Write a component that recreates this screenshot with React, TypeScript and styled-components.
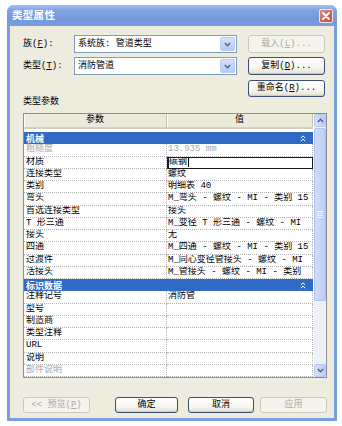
import React from 'react';
import styled, { createGlobalStyle } from 'styled-components';

const Global = createGlobalStyle`
  html, body { margin: 0; padding: 0; background: #ffffff; }
  body {
    font-family: "Liberation Mono", "Noto Sans CJK SC", monospace;
    font-size: 9px;
    color: #000;
  }
  * { box-sizing: border-box; }
`;

const Page = styled.div`
  padding: 5px 5px 5px 7px;
`;

const Window = styled.div`
  width: 330px;
  height: 416px;
  display: flex;
  flex-direction: column;
  background: #7c9de0;
  border-radius: 7px 7px 0 0;
`;

const TitleBar = styled.div`
  height: 21px;
  flex: none;
  display: flex;
  align-items: center;
  justify-content: space-between;
  padding: 0 4px 0 5px;
  border-radius: 7px 7px 0 0;
  background: linear-gradient(#a4c0f0 0%, #7fa3e3 25%, #7398dc 70%, #7b9ee0 100%);
`;

const Title = styled.span`
  font-family: "Noto Sans CJK SC", sans-serif;
  font-weight: bold;
  font-size: 10.5px;
  line-height: 1;
  color: #ffffff;
  letter-spacing: 0.3px;
`;

const CloseButton = styled.div`
  width: 14px;
  height: 14px;
  margin-top: 1px;
  border: 1px solid #f4e4e2;
  border-radius: 2px;
  background: linear-gradient(135deg, #dc8e85, #c6635a 60%, #b9544c);
  display: flex;
  align-items: center;
  justify-content: center;
`;

const Body = styled.div`
  flex: 1;
  margin: 0 3px 3px 3px;
  background: #eeecdf;
  display: flex;
  flex-direction: column;
  padding: 9px 7px 0 13px;
`;

const TopGrid = styled.div`
  display: grid;
  grid-template-columns: 51px 163px 1fr 77px;
  grid-auto-rows: 18px;
  row-gap: 4px;
  align-items: center;
  padding-right: 2px;
`;

const FieldLabel = styled.div`
  grid-column: 1;
  line-height: 11px;
  white-space: nowrap;
`;

const Select = styled.div`
  grid-column: 2;
  height: 18px;
  border: 1px solid #7f9db9;
  background: #ffffff;
  display: flex;
  align-items: center;
  padding-left: 3px;
  line-height: 11px;
`;

const DropButton = styled.div`
  width: 15px;
  height: 14px;
  margin-left: auto;
  margin-right: 1px;
  border: 1px solid #b9cbf5;
  border-radius: 2px;
  background: linear-gradient(#d5e0fa, #b8caf4);
  display: flex;
  align-items: center;
  justify-content: center;
`;

const Button = styled.button<{ $w?: number; $h?: number; $col?: number }>`
  grid-column: ${p => p.$col ?? 'auto'};
  width: ${p => (p.$w ? `${p.$w}px` : 'auto')};
  height: ${p => p.$h ?? 18}px;
  padding: 0;
  border: 1px solid #3b4f73;
  border-radius: 3px;
  background: linear-gradient(#ffffff 0%, #f6f5ef 60%, #e3e0d4 100%);
  box-shadow: inset 0 -1px 0 #d0ccbd;
  font: inherit;
  line-height: 11px;
  color: #000;
  display: flex;
  align-items: center;
  justify-content: center;
  white-space: nowrap;
  &:disabled {
    border-color: #cbc8bb;
    background: #f4f3ec;
    box-shadow: none;
    color: #aeab9c;
  }
`;

const SectionLabel = styled.div`
  margin-top: 0;
  line-height: 10px;
  height: 10px;
`;

const PropGrid = styled.div`
  margin-top: 6px;
  height: 265px;
  border: 1px solid #8e8e8e;
  background: #ffffff;
  display: flex;
`;

const Table = styled.div`
  flex: 1;
  min-width: 0;
  display: flex;
  flex-direction: column;
`;

const Header = styled.div`
  display: grid;
  grid-template-columns: 143px 1fr;
  height: 15px;
  flex: none;
  background: #ebeadb;
  border-bottom: 2px solid #d4d0c3;
`;

const HeadCell = styled.div`
  display: flex;
  align-items: center;
  justify-content: center;
  border-right: 1px solid #c5c1ad;
  box-shadow: inset 1px 0 #ffffff;
  line-height: 11px;
`;

const Rows = styled.div`
  margin-top: 3px;
  display: flex;
  flex-direction: column;
`;

const GroupRow = styled.div`
  height: 12.25px;
  background: #316ac5;
  color: #ffffff;
  font-family: "Noto Sans CJK SC", sans-serif;
  font-weight: bold;
  display: flex;
  align-items: center;
  justify-content: space-between;
  padding: 0 7px 0 2px;
  line-height: 11px;
`;

const ItemRow = styled.div`
  height: 12.25px;
  display: grid;
  grid-template-columns: 143px 1fr;
`;

const Cell = styled.div<{ $dim?: boolean; $edit?: boolean; $name?: boolean }>`
  min-width: 0;
  display: flex;
  align-items: center;
  overflow: hidden;
  white-space: nowrap;
  line-height: 11px;
  padding-left: ${p => (p.$name ? 2 : 1)}px;
  color: ${p => (p.$dim ? '#a8a8a8' : '#000')};
  border-bottom: 1px dotted #b4b4b4;
  border-right: 1px dotted #b4b4b4;
  ${p =>
    p.$edit &&
    `
    border: 1px solid #1a1a1a;
    border-left-width: 2px;
    padding-left: 0;
  `}
`;

const Caret = styled.span`
  display: inline-block;
  width: 1px;
  height: 9px;
  margin-left: 1px;
  background: #000;
`;

const ScrollBar = styled.div`
  width: 12px;
  margin-left: 1px;
  display: flex;
  flex-direction: column;
  background: #eef0f8;
`;

const ScrollArrow = styled.div`
  height: 13px;
  flex: none;
  border: 1px solid #b5c8f4;
  border-radius: 2px;
  background: linear-gradient(90deg, #d3def9, #bccdf5);
  display: flex;
  align-items: center;
  justify-content: center;
`;

const Track = styled.div`
  flex: 1;
  padding: 1px 0;
  display: flex;
  flex-direction: column;
`;

const Thumb = styled.div<{ $h: number }>`
  height: ${p => p.$h}px;
  border: 1px solid #aec3f2;
  border-radius: 2px;
  background: linear-gradient(90deg, #cfdcfa, #bccdf6);
  display: flex;
  align-items: center;
  justify-content: center;
`;

const Footer = styled.div`
  margin-top: 19px;
  display: flex;
  align-items: center;
`;

const Spacer = styled.div`
  flex: 1;
`;

const Gap = styled.div<{ $w: number }>`
  width: ${p => p.$w}px;
`;

const ChevronDown = () => (
  <svg width="7" height="5" viewBox="0 0 7 5">
    <polyline points="0.8,1 3.5,3.7 6.2,1" fill="none" stroke="#4d6185" strokeWidth="1.4" />
  </svg>
);

const ChevronUp = () => (
  <svg width="7" height="5" viewBox="0 0 7 5">
    <polyline points="0.8,4 3.5,1.3 6.2,4" fill="none" stroke="#4d6185" strokeWidth="1.4" />
  </svg>
);

const Collapse = () => (
  <svg width="6" height="7" viewBox="0 0 6 7">
    <polyline points="0.8,3 3,0.9 5.2,3" fill="none" stroke="#ffffff" strokeWidth="1" />
    <polyline points="0.8,6.2 3,4.1 5.2,6.2" fill="none" stroke="#ffffff" strokeWidth="1" />
  </svg>
);

const Grip = () => (
  <svg width="6" height="7" viewBox="0 0 6 7">
    {[0.5, 2.5, 4.5, 6.5].map(y => (
      <line key={y} x1="0" y1={y} x2="6" y2={y} stroke="#eef3fd" strokeWidth="1" />
    ))}
  </svg>
);

const CloseX = () => (
  <svg width="8" height="8" viewBox="0 0 8 8">
    <path d="M1 1 L7 7 M7 1 L1 7" stroke="#ffffff" strokeWidth="1.8" strokeLinecap="round" />
  </svg>
);

type Row =
  | { kind: 'group'; name: string }
  | { kind: 'item'; name: string; value?: string; dim?: boolean; edit?: boolean };

const rows: Row[] = [
  { kind: 'group', name: '机械' },
  { kind: 'item', name: '粗糙度', value: '13.935 mm', dim: true },
  { kind: 'item', name: '材质', value: '碳钢', edit: true },
  { kind: 'item', name: '连接类型', value: '螺纹' },
  { kind: 'item', name: '类别', value: '明细表 40' },
  { kind: 'item', name: '弯头', value: 'M_弯头 - 螺纹 - MI - 类别 15' },
  { kind: 'item', name: '首选连接类型', value: '接头' },
  { kind: 'item', name: 'T 形三通', value: 'M_变径 T 形三通 - 螺纹 - MI' },
  { kind: 'item', name: '接头', value: '无' },
  { kind: 'item', name: '四通', value: 'M_四通 - 螺纹 - MI - 类别 15' },
  { kind: 'item', name: '过渡件', value: 'M_同心变径管接头 - 螺纹 - MI' },
  { kind: 'item', name: '活接头', value: 'M_管接头 - 螺纹 - MI - 类别' },
  { kind: 'group', name: '标识数据' },
  { kind: 'item', name: '注释记号', value: '消防管' },
  { kind: 'item', name: '型号' },
  { kind: 'item', name: '制造商' },
  { kind: 'item', name: '类型注释' },
  { kind: 'item', name: 'URL' },
  { kind: 'item', name: '说明' },
  { kind: 'item', name: '部件说明', dim: true },
];

export default function App() {
  return (
    <Page>
      <Global />
      <Window>
        <TitleBar>
          <Title>类型属性</Title>
          <CloseButton>
            <CloseX />
          </CloseButton>
        </TitleBar>
        <Body>
          <TopGrid>
            <FieldLabel>
              族(<u>F</u>):
            </FieldLabel>
            <Select>
              系统族: 管道类型
              <DropButton>
                <ChevronDown />
              </DropButton>
            </Select>
            <Button $col={4} disabled>
              载入(<u>L</u>)...
            </Button>

            <FieldLabel>
              类型(<u>T</u>):
            </FieldLabel>
            <Select>
              消防管道
              <DropButton>
                <ChevronDown />
              </DropButton>
            </Select>
            <Button $col={4}>
              复制(<u>D</u>)...
            </Button>

            <Button $col={4} $h={17}>
              重命名(<u>R</u>)...
            </Button>
          </TopGrid>

          <SectionLabel>类型参数</SectionLabel>

          <PropGrid>
            <Table>
              <Header>
                <HeadCell>参数</HeadCell>
                <HeadCell>值</HeadCell>
              </Header>
              <Rows>
                {rows.map((r, i) =>
                  r.kind === 'group' ? (
                    <GroupRow key={i}>
                      <span>{r.name}</span>
                      <Collapse />
                    </GroupRow>
                  ) : (
                    <ItemRow key={i}>
                      <Cell $name $dim={r.dim}>
                        {r.name}
                      </Cell>
                      <Cell $dim={r.dim} $edit={r.edit}>
                        {r.value ?? ''}
                        {r.edit && <Caret />}
                      </Cell>
                    </ItemRow>
                  )
                )}
              </Rows>
            </Table>
            <ScrollBar>
              <ScrollArrow>
                <ChevronUp />
              </ScrollArrow>
              <Track>
                <Thumb $h={173}>
                  <Grip />
                </Thumb>
              </Track>
              <ScrollArrow>
                <ChevronDown />
              </ScrollArrow>
            </ScrollBar>
          </PropGrid>

          <Footer>
            <Button $w={67} $h={16} disabled>
              &lt;&lt; 预览(<u>P</u>)
            </Button>
            <Spacer />
            <Button $w={63} $h={16}>
              确定
            </Button>
            <Gap $w={10} />
            <Button $w={66} $h={16}>
              取消
            </Button>
            <Gap $w={6} />
            <Button $w={67} $h={16} disabled>
              应用
            </Button>
          </Footer>
        </Body>
      </Window>
    </Page>
  );
}
